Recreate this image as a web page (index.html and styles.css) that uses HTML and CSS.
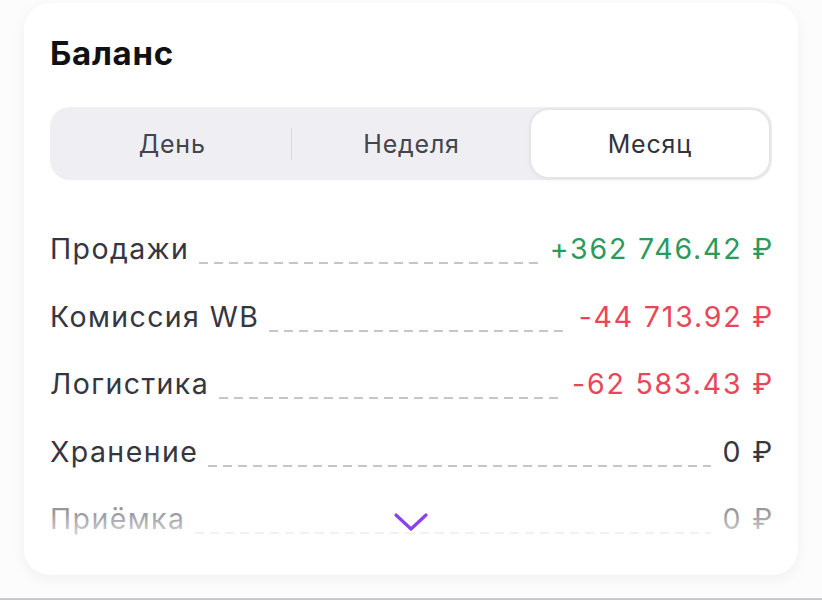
FILE: index.html
```html
<!DOCTYPE html>
<html lang="ru">
<head>
    <meta charset="UTF-8">
    <meta name="viewport" content="width=device-width, initial-scale=1.0">
    <title>Баланс</title>
    <link rel="stylesheet" href="styles.css">
</head>
<body>
    <div class="page">
        <div class="card">
            <h1 class="title">Баланс</h1>

            <div class="segments">
                <div class="segment">День</div>
                <div class="divider"></div>
                <div class="segment">Неделя</div>
                <div class="segment active">Месяц</div>
            </div>

            <div class="rows">
                <div class="row">
                    <span class="label">Продажи</span>
                    <span class="leader"></span>
                    <span class="value plus">+362 746.42 ₽</span>
                </div>
                <div class="row">
                    <span class="label">Комиссия WB</span>
                    <span class="leader"></span>
                    <span class="value minus">-44 713.92 ₽</span>
                </div>
                <div class="row">
                    <span class="label">Логистика</span>
                    <span class="leader"></span>
                    <span class="value minus">-62 583.43 ₽</span>
                </div>
                <div class="row">
                    <span class="label">Хранение</span>
                    <span class="leader"></span>
                    <span class="value">0 ₽</span>
                </div>
                <div class="row">
                    <span class="label">Приёмка</span>
                    <span class="leader"></span>
                    <span class="value">0 ₽</span>
                </div>
            </div>

            <div class="fade"></div>
            <button class="more" aria-label="Показать ещё">
                <svg width="36" height="20" viewBox="0 0 36 20">
                    <path d="M3 3 L18 17 L33 3" fill="none" stroke="#8a3ff2" stroke-width="3.2" stroke-linecap="round" stroke-linejoin="round"/>
                </svg>
            </button>
        </div>
    </div>
    <div class="bottom-line"></div>
</body>
</html>
```

FILE: styles.css
```css
html, body {
    margin: 0;
    padding: 0;
}

body {
    background: #fcfcfc;
    font-family: Inter, "Noto Sans", sans-serif;
    color: #36363e;
    height: 600px;
    display: flex;
    flex-direction: column;
}

.page {
    flex: 1;
    padding: 3px 24px 0 24px;
}

.card {
    position: relative;
    background: #ffffff;
    border-radius: 26px;
    box-shadow: 0 4px 14px rgba(0, 0, 0, 0.05);
    padding: 28px 26px 0 26px;
    height: 572px;
    box-sizing: border-box;
    overflow: hidden;
}

.title {
    margin: 0;
    font-size: 33px;
    font-weight: 700;
    color: #111114;
    letter-spacing: 0.7px;
    line-height: 44px;
}

.segments {
    display: flex;
    align-items: center;
    margin-top: 32px;
    height: 73px;
    padding: 3px;
    box-sizing: border-box;
    background: #efeff3;
    border-radius: 20px;
}

.segment {
    flex: 1;
    height: 100%;
    display: flex;
    align-items: center;
    justify-content: center;
    font-size: 25px;
    letter-spacing: 0.8px;
    color: #44444c;
    border-radius: 18px;
}

.segment.active {
    background: #ffffff;
    box-shadow: 0 0 0 2px #e6e6ea, 0 2px 6px rgba(0, 0, 0, 0.06);
    color: #33333b;
}

.divider {
    width: 1px;
    height: 32px;
    background: #d6d6dc;
}

.rows {
    display: flex;
    flex-direction: column;
    margin-top: 51px;
}

.row {
    display: flex;
    align-items: baseline;
    height: 67.5px;
    font-size: 28.5px;
    letter-spacing: 1.4px;
    color: #36363e;
}

.leader {
    flex: 1;
    margin: 0 12px 0 10px;
    height: 2px;
    background: linear-gradient(90deg, #c6c6ca 9px, transparent 9px) 0 0 / 15px 2px repeat-x;
    position: relative;
    top: 5px;
}

.value {
    white-space: nowrap;
    letter-spacing: 1.8px;
    margin-right: -2px;
}

.value.plus {
    color: #2b9a5c;
}

.value.minus {
    color: #e9465a;
}

.fade {
    position: absolute;
    left: 0;
    right: 0;
    bottom: 0;
    height: 95px;
    background: linear-gradient(rgba(255, 255, 255, 0.35), rgba(255, 255, 255, 0.5) 35%, #ffffff 75%);
}

.more {
    position: absolute;
    left: 50%;
    top: 509px;
    transform: translateX(-50%);
    border: 0;
    background: none;
    padding: 0;
    line-height: 0;
}

.bottom-line {
    height: 2px;
    background: #c8c8cc;
}
```
